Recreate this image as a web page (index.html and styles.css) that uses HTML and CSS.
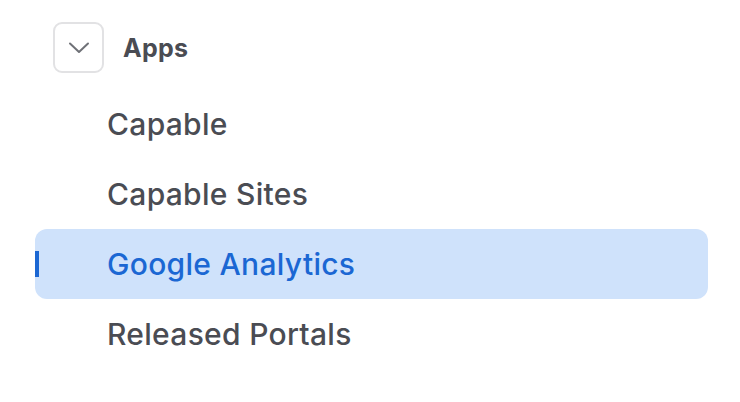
FILE: index.html
```html
<!DOCTYPE html>
<html>
<head>
<meta charset="utf-8">
<link rel="stylesheet" href="styles.css">
</head>
<body>
<nav class="sidebar">
  <div class="group-header">
    <button class="toggle" aria-label="Collapse">
      <svg width="22" height="12" viewBox="0 0 22 12"><path d="M2 1.5 L11 10 L20 1.5" fill="none" stroke="#6f7177" stroke-width="2" stroke-linecap="round" stroke-linejoin="round"/></svg>
    </button>
    <span class="group-title">Apps</span>
  </div>
  <ul class="items">
    <li class="item">Capable</li>
    <li class="item">Capable Sites</li>
    <li class="item active">Google Analytics</li>
    <li class="item">Released Portals</li>
  </ul>
</nav>
</body>
</html>
```
FILE: styles.css
```css
html, body {
  margin: 0;
  padding: 0;
  background: #ffffff;
}
body {
  font-family: Inter, "Noto Sans", sans-serif;
  color: #4a4c53;
}
.sidebar {
  width: 673px;
  padding: 22px 0 0 35px;
}
.group-header {
  display: flex;
  align-items: center;
  gap: 19px;
  padding-left: 18px;
  height: 51px;
}
.toggle {
  width: 51px;
  height: 51px;
  box-sizing: border-box;
  border: 2px solid #e2e2e4;
  border-radius: 9px;
  background: #fff;
  display: flex;
  align-items: center;
  justify-content: center;
  padding: 0;
}
.group-title {
  font-size: 25px;
  letter-spacing: 0.3px;
  font-weight: 700;
  color: #4a4c53;
}
.items {
  list-style: none;
  margin: 16px 0 0 0;
  padding: 0;
}
.item {
  position: relative;
  height: 70px;
  display: flex;
  align-items: center;
  padding-left: 72px;
  font-size: 30px;
  letter-spacing: 0.3px;
  font-weight: 500;
  border-radius: 12px;
}
.item.active {
  background: #cfe2fb;
  color: #1b67d3;
}
.item.active::before {
  content: "";
  position: absolute;
  left: 0;
  top: 22px;
  width: 4px;
  height: 26px;
  background: #1b67d3;
}
```
